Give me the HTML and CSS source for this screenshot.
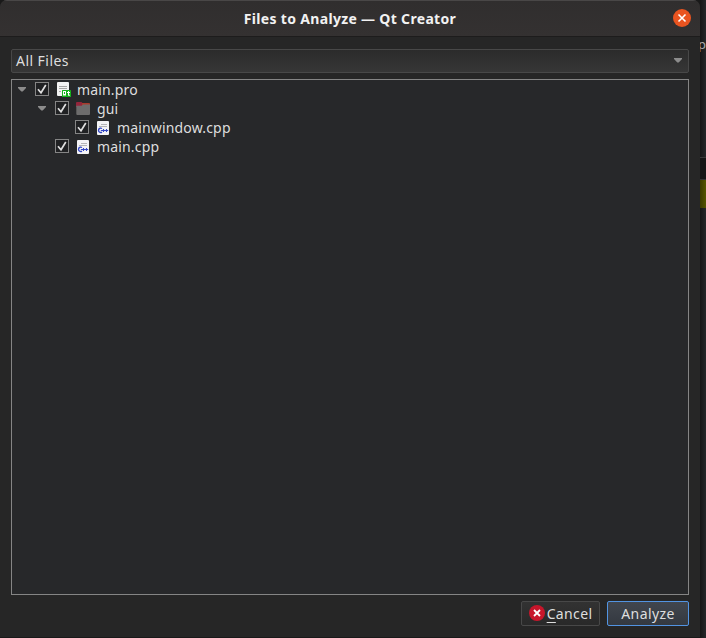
FILE: index.html
```html
<!DOCTYPE html>
<html lang="en">
<head>
<meta charset="utf-8">
<title>Files to Analyze — Qt Creator</title>
<link rel="stylesheet" href="styles.css">
</head>
<body>
<svg class="defs" width="0" height="0" aria-hidden="true">
  <symbol id="arrow" viewBox="0 0 8 5"><path d="M0 0h8v1L4.7 4.5H3.3L0 1z" fill="#8c8c8c"/></symbol>
  <symbol id="check" viewBox="0 0 14 14"><rect x=".5" y=".5" width="13" height="13" fill="#202123" stroke="#858585"/><path d="M3 7.2l3 3.5L10.8 3" fill="none" stroke="#dedede" stroke-width="1.7"/></symbol>
  <symbol id="pro" viewBox="0 0 14 15"><rect width="12" height="14" rx="1" fill="#f3f3f3"/><path d="M2 4.500h8M2 6.500h8M2 9.500h2" stroke="#a5a5a5"/><rect x="5" y="8" width="9" height="7" rx=".5" fill="#14b01c"/><rect x="6.500" y="9.500" width="2" height="3.500" fill="none" stroke="#fff"/><path d="M11.500 9v4.500M10 10.500h3M11.500 13.200h1.500" fill="none" stroke="#fff"/></symbol>
  <symbol id="folder" viewBox="0 0 15 14"><path d="M0 1q0-1 1-1h4.500l1.500 1.500V5H0z" fill="#94253b"/><path d="M6 1h7q1 0 1 1v3H6z" fill="#a83a2c"/><path d="M.3 3.700h5.400L7 2.600h7V12.100q0 1-1 1H1.300q-1 0-1-1z" fill="#6d6c6c"/></symbol>
  <symbol id="cpp" viewBox="0 0 12 14"><rect width="12" height="14" rx="1" fill="#f4f4f6"/><path d="M4 3.500h6M2 5.500h8" stroke="#b5b5b8"/><path d="M5 7.500q-1-.6-2-.3-1.500.4-1.500 2.100t1.500 2.100q1 .3 2-.3" fill="none" stroke="#3346c4" stroke-width="1.400"/><path d="M3.800 9.500h7.400M6.500 8v3M9.500 8v3" stroke="#3346c4" stroke-width="1.100"/></symbol>
</svg>
<main class="window">
  <header class="titlebar">
    <h1 class="title">Files to Analyze — Qt Creator</h1>
    <svg class="close" viewBox="0 0 18 18"><circle cx="9" cy="9" r="9" fill="#e95420"/><path d="M5.500 5.500l7 7M12.500 5.500l-7 7" stroke="#fff" stroke-width="1.600"/></svg>
  </header>
  <div class="filter"><span class="filter-text">All Files</span><svg class="arrow"><use href="#arrow"/></svg></div>
  <div class="tree">
    <div class="row"><svg class="arrow"><use href="#arrow"/></svg><svg class="check"><use href="#check"/></svg><span class="icon"><svg width="14" height="15"><use href="#pro"/></svg></span><span>main.pro</span></div>
    <div class="row level-1"><svg class="arrow"><use href="#arrow"/></svg><svg class="check"><use href="#check"/></svg><span class="icon folder"><svg width="15" height="14"><use href="#folder"/></svg></span><span>gui</span></div>
    <div class="row level-2"><span class="arrow"></span><svg class="check"><use href="#check"/></svg><span class="icon"><svg width="12" height="14"><use href="#cpp"/></svg></span><span>mainwindow.cpp</span></div>
    <div class="row level-1"><span class="arrow"></span><svg class="check"><use href="#check"/></svg><span class="icon"><svg width="12" height="14"><use href="#cpp"/></svg></span><span>main.cpp</span></div>
  </div>
  <footer class="actions">
    <div class="button cancel"><svg width="16" height="16" viewBox="0 0 16 16"><circle cx="8" cy="8" r="8" fill="#c7162b"/><path d="M5 5l6 6M11 5l-6 6" stroke="#fff" stroke-width="1.800"/></svg><span class="cancel-text"><span class="mnemonic">C</span>ancel</span></div>
    <div class="button primary">Analyze</div>
  </footer>
</main>
<aside class="behind"><span class="peek">p</span><div class="dark"></div><div class="yellow"></div></aside>
</body>
</html>
```

FILE: styles.css
```css
* { box-sizing: border-box; }
body {
  margin: 0; width: 706px; height: 638px; overflow: hidden;
  display: flex; background: #191919; color: #dedede;
  font: 14px/19px "Noto Sans", "Open Sans", sans-serif;
}
svg { display: block; flex: none; }
.defs { position: absolute; }
.window {
  width: 700px; height: 637px; flex: none; display: flex; flex-direction: column;
  background: #262626; border-radius: 7px 7px 0 0; overflow: hidden;
}
.titlebar {
  height: 37px; flex: none; display: grid; grid-template-columns: 1fr 18px; align-items: center;
  padding: 0 9px 1px 0; background: linear-gradient(#302e2e, #343131);
  border-top: 1px solid #494747; border-bottom: 1px solid #1d1c1c;
}
.title {
  margin: 0 0 0 27px; padding-top: 1px; text-align: center; white-space: nowrap;
  font-size: 14px; line-height: 19px; font-weight: 700; letter-spacing: .32px; color: #f2f2f2;
}
.close { width: 18px; height: 18px; }
.filter {
  height: 24px; flex: none; margin: 12px 11px 6px; padding: 0 6px 2px 4px;
  display: flex; align-items: center; justify-content: space-between;
  border: 1px solid #484848; border-radius: 2px; background: linear-gradient(#2b2b2b, #363636);
}
.filter-text { letter-spacing: .45px; }
.arrow { width: 8px; height: 5px; flex: none; }
.tree { height: 516px; flex: none; margin: 0 11px; border: 1px solid #858585; background: #27282a; }
.row { height: 19px; display: flex; align-items: center; padding-left: 6px; white-space: nowrap; letter-spacing: .16px; }
.level-1 { padding-left: 26px; }
.level-2 { padding-left: 46px; }
.check { width: 14px; height: 14px; margin: 0 0 1px 9px; }
.icon { width: 20px; flex: none; margin-left: 8px; }
.folder svg { margin-left: -1px; }
.actions { display: flex; justify-content: flex-end; gap: 7px; padding: 6px 11px 0; }
.button {
  height: 25px; display: flex; align-items: center; justify-content: center;
  border: 1px solid #484848; border-radius: 2px; background: linear-gradient(#323232, #292929);
}
.cancel { width: 79px; gap: 2px; letter-spacing: .35px; padding-bottom: 1px; }
.cancel-text { padding-top: 1px; }
.primary { width: 82px; letter-spacing: .4px; border-color: #5294e2; background: linear-gradient(#41464e, #343940); }
.mnemonic { text-decoration: underline; text-underline-offset: 3px; text-decoration-thickness: 1px; }
.behind {
  width: 6px; flex: none; height: 638px; display: flex; flex-direction: column;
  background: linear-gradient(90deg, #161616, #26282a); overflow: hidden;
}
.peek { height: 157px; flex: none; padding-top: 35px; font-size: 13px; color: #aaa; text-indent: -2px; }
.dark { height: 23px; background: #161616; border-top: 1px solid #393939; border-bottom: 1px solid #333; }
.yellow { height: 28px; background: linear-gradient(90deg, #3a3900, #565500); }
```
